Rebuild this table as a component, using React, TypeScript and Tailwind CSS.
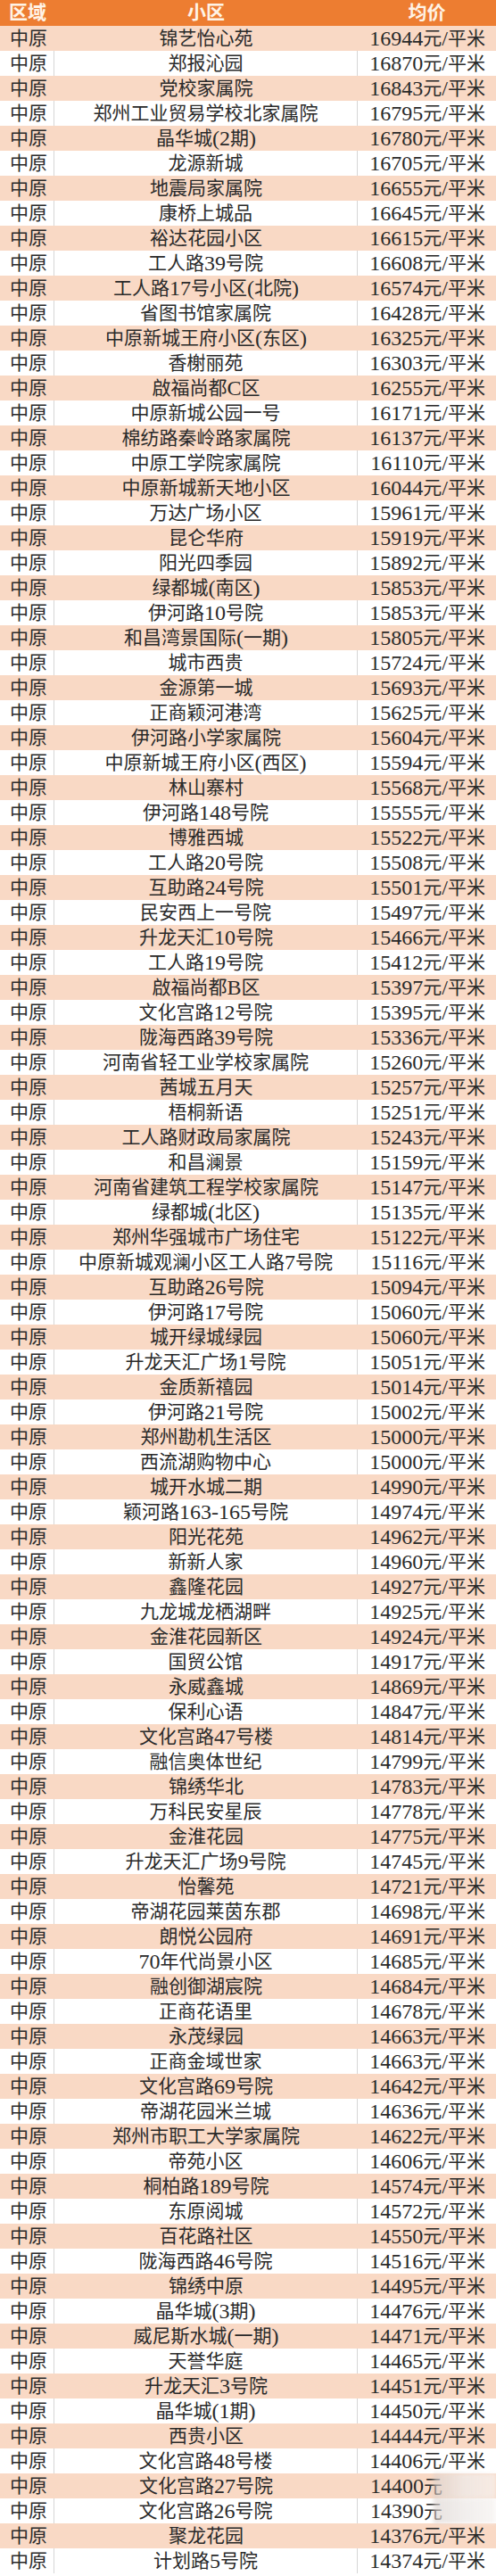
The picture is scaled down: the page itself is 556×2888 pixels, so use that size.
import React from "react";

const data: [string, number][] = [
  ["锦艺怡心苑", 16944],
  ["郑报沁园", 16870],
  ["党校家属院", 16843],
  ["郑州工业贸易学校北家属院", 16795],
  ["晶华城(2期)", 16780],
  ["龙源新城", 16705],
  ["地震局家属院", 16655],
  ["康桥上城品", 16645],
  ["裕达花园小区", 16615],
  ["工人路39号院", 16608],
  ["工人路17号小区(北院)", 16574],
  ["省图书馆家属院", 16428],
  ["中原新城王府小区(东区)", 16325],
  ["香榭丽苑", 16303],
  ["啟福尚都C区", 16255],
  ["中原新城公园一号", 16171],
  ["棉纺路秦岭路家属院", 16137],
  ["中原工学院家属院", 16110],
  ["中原新城新天地小区", 16044],
  ["万达广场小区", 15961],
  ["昆仑华府", 15919],
  ["阳光四季园", 15892],
  ["绿都城(南区)", 15853],
  ["伊河路10号院", 15853],
  ["和昌湾景国际(一期)", 15805],
  ["城市西贵", 15724],
  ["金源第一城", 15693],
  ["正商颖河港湾", 15625],
  ["伊河路小学家属院", 15604],
  ["中原新城王府小区(西区)", 15594],
  ["林山寨村", 15568],
  ["伊河路148号院", 15555],
  ["博雅西城", 15522],
  ["工人路20号院", 15508],
  ["互助路24号院", 15501],
  ["民安西上一号院", 15497],
  ["升龙天汇10号院", 15466],
  ["工人路19号院", 15412],
  ["啟福尚都B区", 15397],
  ["文化宫路12号院", 15395],
  ["陇海西路39号院", 15336],
  ["河南省轻工业学校家属院", 15260],
  ["茜城五月天", 15257],
  ["梧桐新语", 15251],
  ["工人路财政局家属院", 15243],
  ["和昌澜景", 15159],
  ["河南省建筑工程学校家属院", 15147],
  ["绿都城(北区)", 15135],
  ["郑州华强城市广场住宅", 15122],
  ["中原新城观澜小区工人路7号院", 15116],
  ["互助路26号院", 15094],
  ["伊河路17号院", 15060],
  ["城开绿城绿园", 15060],
  ["升龙天汇广场1号院", 15051],
  ["金质新禧园", 15014],
  ["伊河路21号院", 15002],
  ["郑州勘机生活区", 15000],
  ["西流湖购物中心", 15000],
  ["城开水城二期", 14990],
  ["颖河路163-165号院", 14974],
  ["阳光花苑", 14962],
  ["新新人家", 14960],
  ["鑫隆花园", 14927],
  ["九龙城龙栖湖畔", 14925],
  ["金淮花园新区", 14924],
  ["国贸公馆", 14917],
  ["永威鑫城", 14869],
  ["保利心语", 14847],
  ["文化宫路47号楼", 14814],
  ["融信奥体世纪", 14799],
  ["锦绣华北", 14783],
  ["万科民安星辰", 14778],
  ["金淮花园", 14775],
  ["升龙天汇广场9号院", 14745],
  ["怡馨苑", 14721],
  ["帝湖花园莱茵东郡", 14698],
  ["朗悦公园府", 14691],
  ["70年代尚景小区", 14685],
  ["融创御湖宸院", 14684],
  ["正商花语里", 14678],
  ["永茂绿园", 14663],
  ["正商金域世家", 14663],
  ["文化宫路69号院", 14642],
  ["帝湖花园米兰城", 14636],
  ["郑州市职工大学家属院", 14622],
  ["帝苑小区", 14606],
  ["桐柏路189号院", 14574],
  ["东原阅城", 14572],
  ["百花路社区", 14550],
  ["陇海西路46号院", 14516],
  ["锦绣中原", 14495],
  ["晶华城(3期)", 14476],
  ["威尼斯水城(一期)", 14471],
  ["天誉华庭", 14465],
  ["升龙天汇3号院", 14451],
  ["晶华城(1期)", 14450],
  ["西贵小区", 14444],
  ["文化宫路48号楼", 14406],
  ["文化宫路27号院", 14400],
  ["文化宫路26号院", 14390],
  ["聚龙花园", 14376],
  ["计划路5号院", 14374],
];

function Txt({ s }: { s: string }) {
  const parts = s.split(/([0-9A-Za-z()\/\-]+)/);
  return (
    <>
      {parts.map((p, i) =>
        p === "" ? null : /^[0-9A-Za-z()\/\-]+$/.test(p) ? (
          <span key={i} className="font-['Liberation_Serif'] text-[24px]">
            {p}
          </span>
        ) : (
          <span key={i}>{p}</span>
        )
      )}
    </>
  );
}

export default function App() {
  return (
    <div className="w-[556px] h-[2888px] bg-white font-['Liberation_Serif','Noto_Sans_CJK_SC',serif] text-[21px] text-[#2a2a2a] leading-none">
      <div className="flex h-[29px] bg-[#ED7D31] text-[#FFF3E6] font-bold items-center">
        <div className="w-[61px] pl-[10px]">区域</div>
        <div className="w-[340px] text-center">小区</div>
        <div className="flex-1 text-center">均价</div>
      </div>
      {data.map(([name, price], i) => {
        const odd = i % 2 === 0;
        const smear = i === 98 || i === 99;
        return (
          <div
            key={i}
            className={
              odd
                ? "flex h-[28px] items-center bg-[#F9D9C5]"
                : "flex h-[28px] items-center bg-white"
            }
          >
            <div
              className={
                odd
                  ? "w-[61px] h-full flex items-center pl-[11px]"
                  : "w-[61px] h-full flex items-center pl-[11px] border-r border-[#D6D6D6]"
              }
            >
              中原
            </div>
            <div
              className={
                odd
                  ? "w-[340px] h-full flex items-center justify-center whitespace-nowrap"
                  : "w-[340px] h-full flex items-center justify-center whitespace-nowrap border-r border-[#D6D6D6]"
              }
            >
              <Txt s={name} />
            </div>
            <div className="flex-1 h-full flex items-center justify-end pr-[12px] whitespace-nowrap relative">
              {smear ? (
                <>
                  <span className="w-[129px] text-left">
                    <Txt s={`${price}元`} />
                  </span>
                  <div className="absolute right-0 top-0 bottom-0 w-[70px] bg-gradient-to-r from-[#D9D0CC]/60 via-[#EEEAE8]/80 to-[#F6F2F0]/70 blur-[2px]" />
                </>
              ) : (
                <Txt s={`${price}元/平米`} />
              )}
            </div>
          </div>
        );
      })}
    </div>
  );
}
